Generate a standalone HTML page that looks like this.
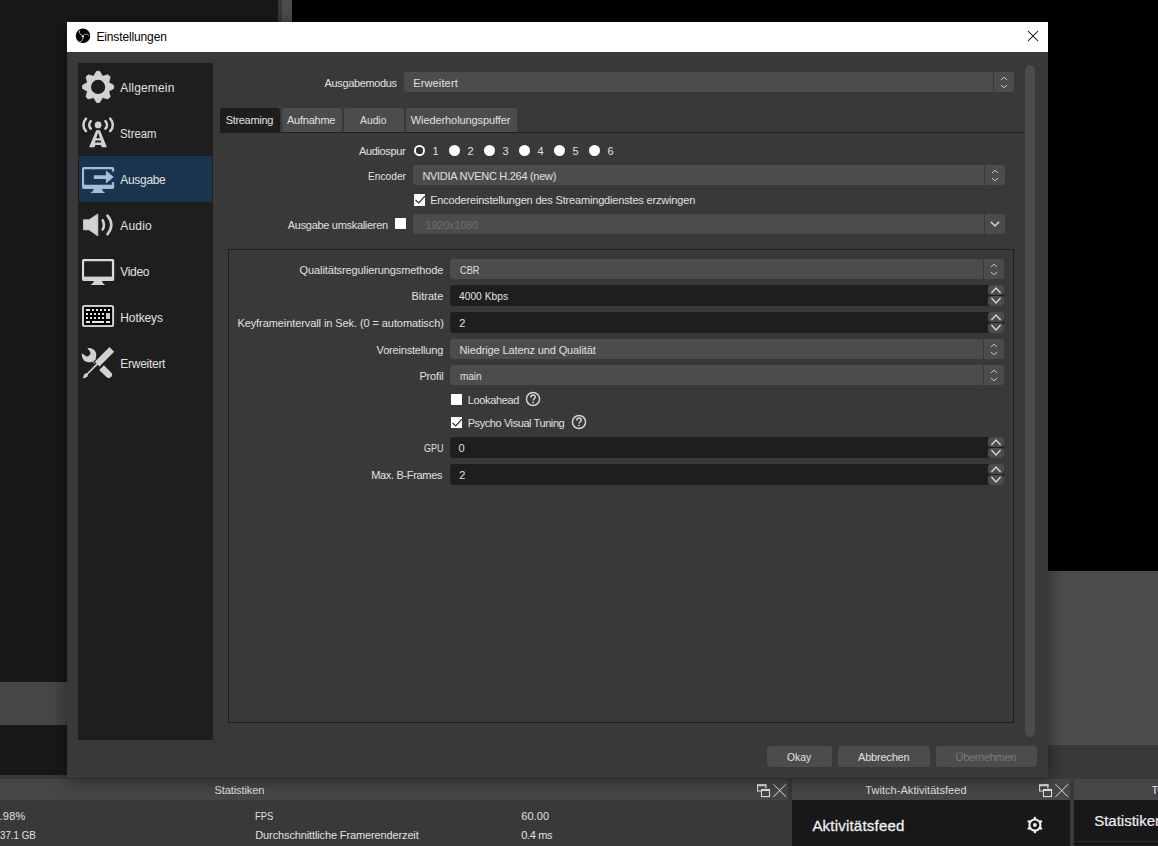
<!DOCTYPE html>
<html lang="de">
<head>
<meta charset="utf-8">
<title>Einstellungen</title>
<style>
*{box-sizing:border-box;margin:0;padding:0}
html,body{width:1158px;height:846px;overflow:hidden;background:#3a3939}
body{position:relative;font-family:"Liberation Sans",sans-serif;font-size:11px;color:#e1e0e1}
.a{position:absolute}
.t{position:absolute;white-space:nowrap;line-height:14px;height:14px}
/* background application */
#leftdock{left:0;top:0;width:278px;height:775px;background:#18181b}
#leftstrip{left:0;top:682px;width:278px;height:43px;background:#464648}
#vsplit{left:282px;top:0;width:10px;height:600px;background:#4c4c4c}
#preview{left:292px;top:0;width:866px;height:571px;background:#000}
#under{left:292px;top:571px;width:866px;height:174px;background:#4c4c4c}
.dockt{position:absolute;top:779px;height:21px;background:#464646}
.dockb{position:absolute;top:800px;height:46px;background:#18181b}
/* dialog */
#dlg{left:67px;top:22px;width:981px;height:756px;background:#3a3939;box-shadow:0 2px 16px 0 rgba(0,0,0,.46)}
#tbar{left:67px;top:22px;width:981px;height:30px;background:#fff}
#side{left:78px;top:63px;width:135px;height:677px;background:#1f1e1f}
#sel{left:79px;top:156px;width:133px;height:46px;background:#19344c}
#vscroll{left:1025px;top:65px;width:10px;height:672px;border-radius:5px;background:#4c4c4c}
#paneline{left:219px;top:131.5px;width:804px;height:1.2px;background:#222122}
#group{left:228px;top:249px;width:786px;height:473.6px;border:1px solid #1f1e1f}
.combo{position:absolute;background:#4c4c4c;border-radius:3px;height:20px}
.combo i{position:absolute;right:20px;top:0;width:1px;height:100%;background:#3a3939}
.spin{position:absolute;background:#1f1e1f;border-radius:3px;height:21px}
.sb{position:absolute;right:0;width:16px;background:#4c4c4c;border-radius:3px}
.btn{position:absolute;top:746px;height:21px;background:#4c4c4c;border-radius:3px}
.cb{position:absolute;width:11.6px;height:11.6px;background:#fff}
.rad{position:absolute;width:11.6px;height:11.6px;border-radius:50%;background:#fff;top:144.7px}
.tab{position:absolute;top:108px;height:23.5px;background:#4c4c4c;border-radius:3px 3px 0 0}
svg{position:absolute;overflow:visible}
</style>
</head>
<body>
<!-- ===== background application ===== -->
<div class="a" id="leftdock"></div>
<div class="a" id="leftstrip"></div>
<div class="a" id="vsplit"></div>
<div class="a" id="preview"></div>
<div class="a" id="under"></div>
<div class="dockt" style="left:0;width:788px"></div>
<div class="dockt" style="left:792px;width:278px"></div>
<div class="dockt" style="left:1074px;width:84px"></div>
<div class="dockb" style="left:792px;width:278px"></div>
<div class="dockb" style="left:1074px;width:84px"></div>
<div class="a" style="left:1074px;top:841px;width:84px;height:1px;background:#2c2c30"></div>
<svg style="left:757px;top:784px" width="30" height="13" viewBox="0 0 30 13"><path d="M4.5 7 H0.6 V0.9 H8.9 V4.6" fill="none" stroke="#e1e0e1" stroke-width="1.1"/><rect x="0" y="0.3" width="9.5" height="2" fill="#e1e0e1"/><rect x="4.5" y="5.5" width="8" height="7.1" fill="none" stroke="#e1e0e1" stroke-width="1.1"/><rect x="4" y="5" width="9" height="2" fill="#e1e0e1"/><path d="M16.5 0.3 L29 12.8 M29 0.3 L16.5 12.8" stroke="#e1e0e1" stroke-width="1.0" fill="none"/></svg>
<svg style="left:1039px;top:784px" width="30" height="13" viewBox="0 0 30 13"><path d="M4.5 7 H0.6 V0.9 H8.9 V4.6" fill="none" stroke="#e1e0e1" stroke-width="1.1"/><rect x="0" y="0.3" width="9.5" height="2" fill="#e1e0e1"/><rect x="4.5" y="5.5" width="8" height="7.1" fill="none" stroke="#e1e0e1" stroke-width="1.1"/><rect x="4" y="5" width="9" height="2" fill="#e1e0e1"/><path d="M16.5 0.3 L29 12.8 M29 0.3 L16.5 12.8" stroke="#e1e0e1" stroke-width="1.0" fill="none"/></svg>
<div class="t" style="left:214.50px;top:783.20px;letter-spacing:-0.093px;">Statistiken</div>
<div class="t" style="left:865.30px;top:783.20px;letter-spacing:0.048px;">Twitch-Aktivitätsfeed</div>
<div class="t" style="left:1151.40px;top:783.20px;">Twitch</div>
<div class="t" style="left:255.30px;top:809.00px;transform:scaleX(0.8501);transform-origin:0 0;">FPS</div>
<div class="t" style="left:255.30px;top:828.00px;letter-spacing:-0.127px;">Durchschnittliche Framerenderzeit</div>
<div class="t" style="left:521.20px;top:809.00px;letter-spacing:0.073px;">60.00</div>
<div class="t" style="left:521.20px;top:828.00px;letter-spacing:-0.342px;">0.4 ms</div>
<div class="t" style="left:-0.50px;top:809.00px;letter-spacing:0.236px;">.98%</div>
<div class="t" style="left:-0.50px;top:828.00px;transform:scaleX(0.8870);transform-origin:0 0;">37.1 GB</div>
<div class="t" style="left:812.40px;top:819.00px;font-size:15px;letter-spacing:0.210px;color:#efeff1;-webkit-text-stroke:0.3px #efeff1;">Aktivitätsfeed</div>
<div class="t" style="left:1094.20px;top:814.00px;font-size:15px;color:#efeff1;-webkit-text-stroke:0.2px #efeff1;">Statistiken</div>
<svg style="left:1026px;top:816px" width="18" height="18" viewBox="-9 -9 18 18"><circle cx="-0.1" cy="0" r="5.5" fill="none" stroke="#efeff1" stroke-width="2.1"/><circle cx="-0.10" cy="-7.00" r="1.3" fill="#efeff1"/><circle cx="5.96" cy="-3.50" r="1.3" fill="#efeff1"/><circle cx="5.96" cy="3.50" r="1.3" fill="#efeff1"/><circle cx="-0.10" cy="7.00" r="1.3" fill="#efeff1"/><circle cx="-6.16" cy="3.50" r="1.3" fill="#efeff1"/><circle cx="-6.16" cy="-3.50" r="1.3" fill="#efeff1"/><circle cx="-0.1" cy="0" r="1.9" fill="#efeff1"/></svg>
<!-- ===== settings dialog ===== -->
<div class="a" id="dlg"></div>
<div class="a" id="tbar"></div>
<svg style="left:75px;top:28px" width="16" height="16" viewBox="75 28 16 16"><circle cx="83" cy="35.85" r="7.25" fill="#000"/><g stroke="#e4e4e4" stroke-width="0.9" fill="none" stroke-linecap="round" opacity="0.9"><path d="M79.4 31.1 C79.2 33.0 80.0 34.7 82.9 36.1"/><path d="M82.9 36.1 C83.8 34.8 85.0 34.2 86.6 34.2 C87.8 34.3 88.4 34.9 88.8 35.7"/><path d="M82.9 36.1 C83.4 38.0 82.8 39.8 81.8 40.8 C81.3 41.3 80.9 41.6 80.4 41.8"/></g><circle cx="82.9" cy="36.3" r="0.95" fill="#e8e8e8"/></svg>
<div class="t" style="left:96.40px;top:29.80px;font-size:12px;letter-spacing:-0.132px;color:#000;">Einstellungen</div>
<svg style="left:1027px;top:30px" width="12" height="12" viewBox="1027 30 12 12"><path d="M1028 31 L1038 41 M1038 31 L1028 41" stroke="#000" stroke-width="1.05" fill="none"/></svg>
<div class="a" id="side"></div>
<div class="a" id="sel"></div>
<svg style="left:82px;top:71px" width="32" height="32" viewBox="0 0 32 32" fill="#d2d2d2"><path fill-rule="evenodd" d="M12.23 4.33 L14.55 0.30 L17.65 0.30 L19.97 4.33 L20.58 5.09 L21.54 4.98 L26.03 3.77 L28.23 5.97 L27.02 10.46 L26.91 11.42 L27.67 12.03 L31.70 14.35 L31.70 17.45 L27.67 19.77 L26.91 20.38 L27.02 21.34 L28.23 25.83 L26.03 28.03 L21.54 26.82 L20.58 26.71 L19.97 27.47 L17.65 31.50 L14.55 31.50 L12.23 27.47 L11.62 26.71 L10.66 26.82 L6.17 28.03 L3.97 25.83 L5.18 21.34 L5.29 20.38 L4.53 19.77 L0.50 17.45 L0.50 14.35 L4.53 12.03 L5.29 11.42 L5.18 10.46 L3.97 5.97 L6.17 3.77 L10.66 4.98 L11.62 5.09 Z M23.200000000000003 15.9 A7.1 7.1 0 1 0 9.000000000000002 15.9 A7.1 7.1 0 1 0 23.200000000000003 15.9 Z"/><path fill="none" stroke="#d2d2d2" stroke-width="0.7" stroke-linejoin="round" d="M12.23 4.33 L14.55 0.30 L17.65 0.30 L19.97 4.33 L20.58 5.09 L21.54 4.98 L26.03 3.77 L28.23 5.97 L27.02 10.46 L26.91 11.42 L27.67 12.03 L31.70 14.35 L31.70 17.45 L27.67 19.77 L26.91 20.38 L27.02 21.34 L28.23 25.83 L26.03 28.03 L21.54 26.82 L20.58 26.71 L19.97 27.47 L17.65 31.50 L14.55 31.50 L12.23 27.47 L11.62 26.71 L10.66 26.82 L6.17 28.03 L3.97 25.83 L5.18 21.34 L5.29 20.38 L4.53 19.77 L0.50 17.45 L0.50 14.35 L4.53 12.03 L5.29 11.42 L5.18 10.46 L3.97 5.97 L6.17 3.77 L10.66 4.98 L11.62 5.09 Z"/></svg>
<svg style="left:82px;top:117px" width="32" height="32" viewBox="0 0 32 32" fill="#d2d2d2"><circle cx="16.1" cy="7.9" r="3.35"/><path fill="none" stroke="#d2d2d2" stroke-width="2.5" stroke-linecap="round" d="M4.01 14.19 A8.9 8.9 0 0 1 4.01 1.61 M28.19 1.61 A8.9 8.9 0 0 1 28.19 14.19 M8.82 11.63 A5.1 5.1 0 0 1 8.82 4.17 M23.38 4.17 A5.1 5.1 0 0 1 23.38 11.63"/><path fill-rule="evenodd" d="M14.2 13.2 L18.0 13.2 L24.9 30.2 L19.8 30.2 L18.9 28.1 L13.3 28.1 L12.4 30.2 L7.1 30.2 Z M16.1 15.6 L17.9 21.2 L14.3 21.2 Z M13.6 23.6 L18.6 23.6 L19.3 25.5 L12.9 25.5 Z"/></svg>
<svg style="left:82px;top:163px" width="32" height="32" viewBox="0 0 32 32" fill="#a4bcd7"><path fill-rule="evenodd" d="M1.7 4 H30.5 A1.7 1.7 0 0 1 32.2 5.7 V24.3 A1.7 1.7 0 0 1 30.5 26 H1.7 A1.7 1.7 0 0 1 0 24.3 V5.7 A1.7 1.7 0 0 1 1.7 4 Z M2.1 6.2 V21.8 H29.9 V6.2 Z"/><rect x="29.2" y="8.6" width="3.6" height="10.6" fill="#19344c"/><path d="M11.8 12.3 H23.9 V7.6 L31.8 14.1 L23.9 20.6 V15.9 H11.8 Z"/><path d="M12 25.8 Q11.6 28.7 8.3 29.9 H23.6 Q20.3 28.7 19.9 25.8 Z"/></svg>
<svg style="left:82px;top:209px" width="32" height="32" viewBox="0 0 32 32" fill="#d2d2d2"><path d="M1.5 10.8 H7 L15.8 5.0 V26.9 L7 20.8 H1.5 Z" stroke="#d2d2d2" stroke-width="0.8" stroke-linejoin="round"/><path fill="none" stroke="#d2d2d2" stroke-width="2.6" stroke-linecap="round" d="M20.7 11.3 Q23.1 15.9 20.7 20.5 M25.5 6.6 Q33.1 15.9 25.5 25.2"/></svg>
<svg style="left:82px;top:255px" width="32" height="32" viewBox="0 0 32 32" fill="#d2d2d2"><path fill-rule="evenodd" fill="#dadada" d="M1.7 4 H30.5 A1.7 1.7 0 0 1 32.2 5.7 V24.3 A1.7 1.7 0 0 1 30.5 26 H1.7 A1.7 1.7 0 0 1 0 24.3 V5.7 A1.7 1.7 0 0 1 1.7 4 Z M2.1 6.2 V21.8 H29.9 V6.2 Z"/><rect x="1" y="21.8" width="30.2" height="3.4"/><path d="M12 25.8 Q11.6 28.7 8.3 29.9 H23.6 Q20.3 28.7 19.9 25.8 Z"/></svg>
<svg style="left:82px;top:301px" width="32" height="32" viewBox="0 0 32 32" fill="#d2d2d2"><rect x="0" y="3.9" width="32.1" height="22.2" rx="2.6"/><rect x="2" y="5.9" width="28.1" height="18.2" fill="#000"/><rect x="4" y="8" width="4" height="2" fill="#e8e8e8"/><rect x="10" y="8" width="2" height="2" fill="#e8e8e8"/><rect x="14" y="8" width="2" height="2" fill="#e8e8e8"/><rect x="18" y="8" width="2" height="2" fill="#e8e8e8"/><rect x="22" y="8" width="2" height="2" fill="#e8e8e8"/><rect x="26" y="8" width="2" height="2" fill="#e8e8e8"/><rect x="4" y="12" width="2" height="2" fill="#e8e8e8"/><rect x="8" y="12" width="2" height="2" fill="#e8e8e8"/><rect x="12" y="12" width="2" height="2" fill="#e8e8e8"/><rect x="16" y="12" width="2" height="2" fill="#e8e8e8"/><rect x="20" y="12" width="2" height="2" fill="#e8e8e8"/><rect x="4" y="16" width="2" height="2" fill="#e8e8e8"/><rect x="8" y="16" width="2" height="2" fill="#e8e8e8"/><rect x="12" y="16" width="2" height="2" fill="#e8e8e8"/><rect x="16" y="16" width="2" height="2" fill="#e8e8e8"/><rect x="20" y="16" width="2" height="2" fill="#e8e8e8"/><rect x="4" y="20" width="4" height="2" fill="#e8e8e8"/><rect x="10" y="20" width="12" height="2" fill="#e8e8e8"/><rect x="24" y="20" width="4" height="2" fill="#e8e8e8"/><rect x="24" y="12" width="4" height="6" fill="#c8c8c8"/></svg>
<svg style="left:82px;top:347px" width="32" height="32" viewBox="0 0 32 32" fill="#d2d2d2"><g transform="translate(7.1 8.1) rotate(-45)"><path fill-rule="evenodd" d="M0 -7.2 A7.2 7.2 0 1 1 -0.01 -7.2 Z"/><path fill="#1f1e1f" d="M-3.3 -3.0 A3.3 3.3 0 0 0 3.3 -3.0 L3.9 -8 L-3.9 -8 Z"/><rect x="-2.3" y="5" width="4.6" height="5.2"/><path d="M-3.3 17.6 H3.3 V27.8 A3.3 3.3 0 0 1 -3.3 27.8 Z"/></g><g transform="translate(29.8 2.45) rotate(45)"><rect x="-4.4" y="-1" width="8.8" height="22.8" fill="#1f1e1f"/><rect x="-3.3" y="0" width="6.6" height="20.7"/><rect x="-0.85" y="20" width="1.7" height="16.5"/><path d="M-0.85 34.5 L-1.9 36.2 L-1.5 38.2 L0 41 L1.5 38.2 L1.9 36.2 L0.85 34.5 Z"/></g></svg>
<div class="t" style="left:120.30px;top:81.00px;font-size:12px;letter-spacing:0.173px;">Allgemein</div>
<div class="t" style="left:120.30px;top:127.00px;font-size:12px;transform:scaleX(0.9436);transform-origin:0 0;">Stream</div>
<div class="t" style="left:120.30px;top:173.00px;font-size:12px;letter-spacing:-0.317px;">Ausgabe</div>
<div class="t" style="left:120.30px;top:219.00px;font-size:12px;letter-spacing:0.171px;">Audio</div>
<div class="t" style="left:120.30px;top:265.00px;font-size:12px;letter-spacing:-0.325px;">Video</div>
<div class="t" style="left:120.30px;top:311.00px;font-size:12px;letter-spacing:-0.108px;">Hotkeys</div>
<div class="t" style="left:120.30px;top:357.00px;font-size:12px;letter-spacing:-0.276px;">Erweitert</div>
<div class="a" id="vscroll"></div>
<div class="t" style="left:324.60px;top:76.00px;letter-spacing:-0.367px;">Ausgabemodus</div>
<div class="combo" style="left:404px;top:72px;width:610px"><i></i></div><svg style="left:999px;top:74px" width="10" height="16" viewBox="-5 -8 10 16"><path d="M-3.1 -2.0 L0 -4.8 L3.1 -2.0 M-3.1 3.0 L0 5.8 L3.1 3.0" stroke="#cbcbcb" stroke-width="0.95" fill="none"/></svg><div class="t" style="left:413.20px;top:76.00px;letter-spacing:0.145px;">Erweitert</div>
<div class="tab" style="left:220px;width:60px;background:#1f1e1f"></div>
<div class="tab" style="left:282px;width:60px"></div>
<div class="tab" style="left:344px;width:60px"></div>
<div class="tab" style="left:406px;width:111px"></div>
<div class="t" style="left:225.70px;top:113.20px;letter-spacing:-0.315px;">Streaming</div>
<div class="t" style="left:287.00px;top:113.20px;letter-spacing:-0.247px;">Aufnahme</div>
<div class="t" style="left:359.60px;top:113.20px;transform:scaleX(0.9387);transform-origin:0 0;">Audio</div>
<div class="t" style="left:410.80px;top:113.20px;letter-spacing:-0.091px;">Wiederholungspuffer</div>
<div class="a" id="paneline"></div>
<div class="t" style="left:358.90px;top:144.00px;letter-spacing:-0.334px;">Audiospur</div>
<div class="rad" style="left:413.7px"></div>
<div class="a" style="left:416.4px;top:147.4px;width:6.2px;height:6.2px;border-radius:50%;background:#333"></div>
<div class="t" style="left:432.45px;top:144.00px;">1</div>
<div class="rad" style="left:448.7px"></div>
<div class="t" style="left:467.45px;top:144.00px;">2</div>
<div class="rad" style="left:483.7px"></div>
<div class="t" style="left:502.45px;top:144.00px;">3</div>
<div class="rad" style="left:518.7px"></div>
<div class="t" style="left:537.45px;top:144.00px;">4</div>
<div class="rad" style="left:553.7px"></div>
<div class="t" style="left:572.45px;top:144.00px;">5</div>
<div class="rad" style="left:588.7px"></div>
<div class="t" style="left:607.45px;top:144.00px;">6</div>
<div class="t" style="left:367.70px;top:169.00px;transform:scaleX(0.9272);transform-origin:0 0;">Encoder</div>
<div class="combo" style="left:413px;top:165px;width:592px"><i></i></div><svg style="left:990px;top:167px" width="10" height="16" viewBox="-5 -8 10 16"><path d="M-3.1 -2.0 L0 -4.8 L3.1 -2.0 M-3.1 3.0 L0 5.8 L3.1 3.0" stroke="#cbcbcb" stroke-width="0.95" fill="none"/></svg><div class="t" style="left:422.40px;top:169.00px;letter-spacing:-0.289px;">NVIDIA NVENC H.264 (new)</div>
<div class="cb" style="left:413.6px;top:194.4px"></div><svg style="left:413.6px;top:194.4px" width="12" height="12" viewBox="0 0 12 12"><path d="M1.5 6.0 L4.7 9.0 L10.9 2.1" stroke="#2a2a2a" stroke-width="1.15" fill="none"/></svg>
<div class="t" style="left:430.20px;top:193.20px;letter-spacing:-0.173px;">Encodereinstellungen des Streamingdienstes erzwingen</div>
<div class="t" style="left:287.80px;top:218.00px;letter-spacing:-0.304px;">Ausgabe umskalieren</div>
<div class="cb" style="left:394.8px;top:217.6px"></div>
<div class="combo" style="left:413px;top:214px;width:592px"><i></i></div><svg style="left:989px;top:220px" width="12" height="8" viewBox="-6 -4 12 8"><path d="M-4.1 -2.1 L0 2.0 L4.1 -2.1" stroke="#d2d2d2" stroke-width="1.5" fill="none"/></svg><div class="t" style="left:425.50px;top:218.00px;letter-spacing:-0.228px;color:#6f6e6f;">1920x1080</div>
<div class="a" id="group"></div>
<div class="t" style="left:299.60px;top:263.00px;letter-spacing:-0.112px;">Qualitätsregulierungsmethode</div>
<div class="combo" style="left:450px;top:259px;width:554px"><i></i></div><svg style="left:989px;top:261px" width="10" height="16" viewBox="-5 -8 10 16"><path d="M-3.1 -2.0 L0 -4.8 L3.1 -2.0 M-3.1 3.0 L0 5.8 L3.1 3.0" stroke="#cbcbcb" stroke-width="0.95" fill="none"/></svg><div class="t" style="left:459.60px;top:263.00px;transform:scaleX(0.8376);transform-origin:0 0;">CBR</div>
<div class="t" style="left:411.40px;top:289.00px;letter-spacing:0.021px;">Bitrate</div>
<div class="spin" style="left:450px;top:285px;width:554px"><div class="sb" style="top:0;height:10px"></div><div class="sb" style="top:11px;height:10px"></div></div><svg style="left:989px;top:285px" width="14" height="21" viewBox="-7 0 14 21"><path d="M-4.6 7.9 L0 3.0 L4.6 7.9 M-4.6 13.1 L0 18.0 L4.6 13.1" stroke="#d2d2d2" stroke-width="1.5" fill="none"/></svg><div class="t" style="left:459.00px;top:289.00px;transform:scaleX(0.9322);transform-origin:0 0;">4000 Kbps</div>
<div class="t" style="left:237.40px;top:316.00px;letter-spacing:-0.084px;">Keyframeintervall in Sek. (0 = automatisch)</div>
<div class="spin" style="left:450px;top:312px;width:554px"><div class="sb" style="top:0;height:10px"></div><div class="sb" style="top:11px;height:10px"></div></div><svg style="left:989px;top:312px" width="14" height="21" viewBox="-7 0 14 21"><path d="M-4.6 7.9 L0 3.0 L4.6 7.9 M-4.6 13.1 L0 18.0 L4.6 13.1" stroke="#d2d2d2" stroke-width="1.5" fill="none"/></svg><div class="t" style="left:459.30px;top:316.00px;">2</div>
<div class="t" style="left:376.60px;top:343.00px;letter-spacing:-0.184px;">Voreinstellung</div>
<div class="combo" style="left:450px;top:339px;width:554px"><i></i></div><svg style="left:989px;top:341px" width="10" height="16" viewBox="-5 -8 10 16"><path d="M-3.1 -2.0 L0 -4.8 L3.1 -2.0 M-3.1 3.0 L0 5.8 L3.1 3.0" stroke="#cbcbcb" stroke-width="0.95" fill="none"/></svg><div class="t" style="left:459.50px;top:343.00px;letter-spacing:-0.117px;">Niedrige Latenz und Qualität</div>
<div class="t" style="left:419.40px;top:369.00px;letter-spacing:-0.164px;">Profil</div>
<div class="combo" style="left:450px;top:365px;width:554px"><i></i></div><svg style="left:989px;top:367px" width="10" height="16" viewBox="-5 -8 10 16"><path d="M-3.1 -2.0 L0 -4.8 L3.1 -2.0 M-3.1 3.0 L0 5.8 L3.1 3.0" stroke="#cbcbcb" stroke-width="0.95" fill="none"/></svg><div class="t" style="left:459.50px;top:369.00px;transform:scaleX(0.9062);transform-origin:0 0;">main</div>
<div class="cb" style="left:450.7px;top:393.6px"></div>
<div class="t" style="left:467.70px;top:393.00px;letter-spacing:-0.353px;">Lookahead</div>
<svg style="left:525.1px;top:391.2px" width="16" height="16" viewBox="-8 -8 16 16"><circle cx="0" cy="0" r="6.55" fill="none" stroke="#d2d2d2" stroke-width="1.5"/><path d="M-2.1 -1.6 C-2.1 -4.6 2.3 -4.6 2.3 -1.9 C2.3 -0.3 0.1 -0.2 0.1 1.5" fill="none" stroke="#d2d2d2" stroke-width="1.5"/><circle cx="0.1" cy="3.4" r="0.85" fill="#d2d2d2"/></svg>
<div class="cb" style="left:450.7px;top:416.7px"></div><svg style="left:450.7px;top:416.7px" width="12" height="12" viewBox="0 0 12 12"><path d="M1.5 6.0 L4.7 9.0 L10.9 2.1" stroke="#2a2a2a" stroke-width="1.15" fill="none"/></svg>
<div class="t" style="left:467.70px;top:416.00px;letter-spacing:-0.419px;">Psycho Visual Tuning</div>
<svg style="left:571.0px;top:414.2px" width="16" height="16" viewBox="-8 -8 16 16"><circle cx="0" cy="0" r="6.55" fill="none" stroke="#d2d2d2" stroke-width="1.5"/><path d="M-2.1 -1.6 C-2.1 -4.6 2.3 -4.6 2.3 -1.9 C2.3 -0.3 0.1 -0.2 0.1 1.5" fill="none" stroke="#d2d2d2" stroke-width="1.5"/><circle cx="0.1" cy="3.4" r="0.85" fill="#d2d2d2"/></svg>
<div class="t" style="left:423.50px;top:441.00px;transform:scaleX(0.8161);transform-origin:0 0;">GPU</div>
<div class="spin" style="left:450px;top:437px;width:554px"><div class="sb" style="top:0;height:10px"></div><div class="sb" style="top:11px;height:10px"></div></div><svg style="left:989px;top:437px" width="14" height="21" viewBox="-7 0 14 21"><path d="M-4.6 7.9 L0 3.0 L4.6 7.9 M-4.6 13.1 L0 18.0 L4.6 13.1" stroke="#d2d2d2" stroke-width="1.5" fill="none"/></svg><div class="t" style="left:458.60px;top:441.00px;">0</div>
<div class="t" style="left:371.20px;top:468.00px;letter-spacing:-0.323px;">Max. B-Frames</div>
<div class="spin" style="left:450px;top:464px;width:554px"><div class="sb" style="top:0;height:10px"></div><div class="sb" style="top:11px;height:10px"></div></div><svg style="left:989px;top:464px" width="14" height="21" viewBox="-7 0 14 21"><path d="M-4.6 7.9 L0 3.0 L4.6 7.9 M-4.6 13.1 L0 18.0 L4.6 13.1" stroke="#d2d2d2" stroke-width="1.5" fill="none"/></svg><div class="t" style="left:459.30px;top:468.00px;">2</div>
<div class="btn" style="left:767px;width:65px"></div>
<div class="btn" style="left:838px;width:92px"></div>
<div class="btn" style="left:936px;width:101px"></div>
<div class="t" style="left:786.50px;top:750.00px;transform:scaleX(0.9437);transform-origin:0 0;">Okay</div>
<div class="t" style="left:858.00px;top:750.00px;letter-spacing:-0.199px;">Abbrechen</div>
<div class="t" style="left:955.60px;top:750.00px;letter-spacing:-0.320px;color:#7a797a;">Übernehmen</div>
</body>
</html>
